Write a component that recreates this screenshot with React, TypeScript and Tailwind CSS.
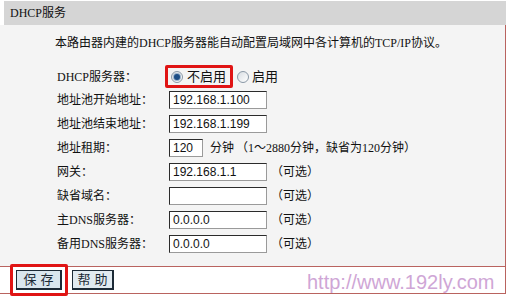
import React from 'react';

const labelFont = { fontFamily: '"Liberation Serif", "Noto Sans CJK SC", serif' };

const Radio = ({ checked }: { checked?: boolean }) => (
  <span className="w-[12px] h-[12px] rounded-full border border-[#8a98a6] bg-gradient-to-br from-[#d8dde2] to-white flex items-center justify-center shrink-0">
    {checked && <span className="w-[6px] h-[6px] rounded-full bg-[#1d4e86] ring-1 ring-[#9bb3cc]" />}
  </span>
);

const Field = ({ value, width = 'w-[98px]' }: { value?: string; width?: string }) => (
  <div
    className={`${width} h-[18px] border border-[#2b2b2b] border-r-[#9a9a9a] border-b-[#9a9a9a] bg-white px-[3px] flex items-center text-[12px] text-[#111]`}
    style={{ fontFamily: '"Liberation Sans", Arial, sans-serif' }}
  >
    {value}
  </div>
);

const Optional = () => <span className="ml-[4px]">（可选）</span>;

const rows: { label: string; value: string }[] = [
  { label: '地址池开始地址：', value: '192.168.1.100' },
  { label: '地址池结束地址：', value: '192.168.1.199' },
];

const tail: { label: string; value: string }[] = [
  { label: '网关：', value: '192.168.1.1' },
  { label: '缺省域名：', value: '' },
  { label: '主DNS服务器：', value: '0.0.0.0' },
  { label: '备用DNS服务器：', value: '0.0.0.0' },
];

export default function App() {
  return (
    <div className="w-[509px] h-[298px] bg-white relative overflow-hidden text-[#111]" style={labelFont}>
      <div className="h-[1px]" />
      <div className="ml-[4px] w-[502px] h-[24px] bg-[#d5d5d5] pl-[6px] flex items-center text-[12px]">DHCP服务</div>

      <div className="w-[506px] h-[242px] bg-[#f4f4f4] border-r border-b border-[#b9635f] pl-[55px] pt-[10px] text-[12px]">
        <p className="leading-[16px] mb-[14px]">本路由器内建的DHCP服务器能自动配置局域网中各计算机的TCP/IP协议。</p>

        <div className="pl-[2px]">
          <div className="h-[23px] flex items-center">
            <span className="w-[108px]">DHCP服务器：</span>
            <div className="relative h-[23px] flex items-center">
              <div className="absolute left-0 top-0 w-[68px] h-[23px] border-[3px] border-[#e01414] rounded-[2px]" />
              <div className="flex items-center gap-[4px] pl-[6px] w-[72px]">
                <Radio checked />
                <span className="text-[13px]">不启用</span>
              </div>
              <div className="flex items-center gap-[3px]">
                <Radio />
                <span className="text-[13px]">启用</span>
              </div>
            </div>
          </div>

          {rows.map((r) => (
            <div key={r.label} className="h-[24px] flex items-center">
              <span className="w-[112px]">{r.label}</span>
              <Field value={r.value} />
            </div>
          ))}

          <div className="h-[24px] flex items-center">
            <span className="w-[112px]">地址租期：</span>
            <Field value="120" width="w-[34px]" />
            <span className="ml-[7px]">分钟</span>
            <span className="ml-[2px]">（1～2880分钟，缺省为120分钟）</span>
          </div>

          {tail.map((r) => (
            <div key={r.label} className="h-[24px] flex items-center">
              <span className="w-[112px]">{r.label}</span>
              <Field value={r.value} />
              <Optional />
            </div>
          ))}
        </div>
      </div>

      <div className="w-[506px] h-[27px] border-r border-b border-[#b9635f] pl-[16px] flex items-center gap-[10px] text-[13px]">
        <div className="relative">
          <div className="absolute -left-[6px] -top-[6px] w-[58px] h-[32px] border-[3px] border-[#e01414] rounded-[2px]" />
          <button className="w-[46px] h-[20px] bg-[#d9e6ee] border border-[#1c2a36] border-r-2 border-b-2 text-[#1c2a36] leading-none tracking-[4px] pl-[4px]">保存</button>
        </div>
        <button className="w-[42px] h-[20px] bg-[#e1eaf0] border border-[#1c2a36] border-r-2 border-b-2 text-[#1c2a36] leading-none tracking-[4px] pl-[4px]">帮助</button>
      </div>

      <div
        className="absolute left-[307px] top-[272px] text-[20px] leading-[20px] text-[#cfa6d6]"
        style={{ fontFamily: '"Liberation Sans", Arial, sans-serif' }}
      >
        http://www.192ly.com
      </div>
    </div>
  );
}
